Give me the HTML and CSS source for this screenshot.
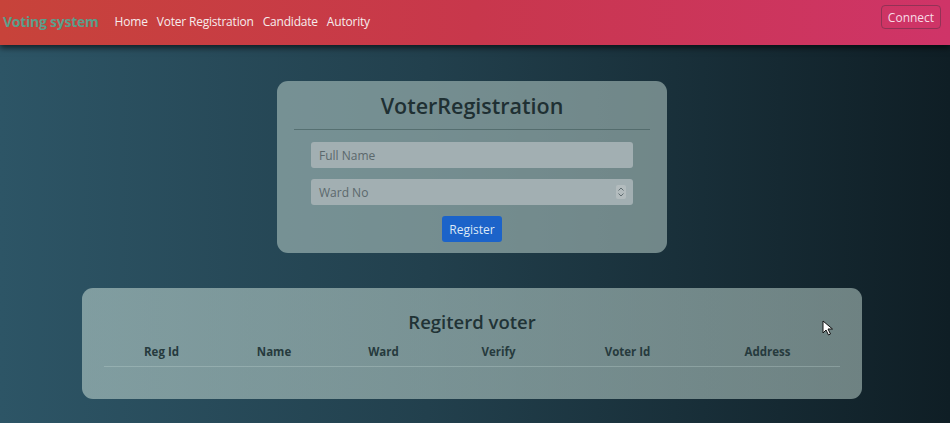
FILE: index.html
```html
<!DOCTYPE html>
<html>
<head>
<meta charset="utf-8">
<link rel="stylesheet" href="styles.css">
</head>
<body>
<nav class="navbar">
  <div class="nav-left">
    <span class="brand">Voting system</span>
    <a class="nav-link">Home</a>
    <a class="nav-link">Voter Registration</a>
    <a class="nav-link">Candidate</a>
    <a class="nav-link">Autority</a>
  </div>
  <button class="connect">Connect</button>
</nav>
<main class="main">
  <section class="card reg-card">
    <h1 class="reg-title">VoterRegistration</h1>
    <hr class="divider">
    <div class="form">
      <div class="input">Full Name</div>
      <div class="input">Ward No<span class="spin"><svg width="8" height="12" viewBox="0 0 8 12"><path d="M1.5 4.5 L4 2 L6.5 4.5 M1.5 7.5 L4 10 L6.5 7.5" fill="none" stroke="#5f6c70" stroke-width="1"/></svg></span></div>
      <button class="register">Register</button>
    </div>
  </section>
  <section class="card list-card">
    <h2 class="list-title">Regiterd voter</h2>
    <div class="table-head">
      <span>Reg Id</span><span>Name</span><span>Ward</span><span>Verify</span><span>Voter Id</span><span>Address</span>
    </div>
    <svg class="cursor" width="12" height="16" viewBox="0 0 12 16"><path d="M1 1 L1 13 L4 10 L6.5 15 L8.5 14 L6 9 L10.5 9 Z" fill="#fff" stroke="#111" stroke-width="1"/></svg>
  </section>
</main>
</body>
</html>
```
FILE: styles.css
```css
* { box-sizing: border-box; }
html, body { margin: 0; height: 100%; }
body {
  font-family: "Open Sans", "Noto Sans", sans-serif;
  background: linear-gradient(90deg, #2d5566 0%, #22404d 45%, #0f1e25 100%);
  overflow: hidden;
}
.navbar {
  height: 45px;
  background: linear-gradient(90deg, #c7433a 0%, #c8374c 50%, #cf3468 100%);
  display: flex;
  justify-content: space-between;
  align-items: flex-start;
  padding: 0 9px 0 3px;
  box-shadow: 0 3px 6px rgba(0,0,0,0.6);
  position: relative;
}
.nav-left {
  display: flex;
  align-items: center;
  height: 43px;
}
.brand {
  font-weight: 700;
  font-size: 14px;
  color: #5c9e8a;
  margin-right: 16px;
  letter-spacing: -0.25px;
}
.nav-link {
  color: #f6ecec;
  font-size: 12px;
  margin-right: 9px;
  letter-spacing: -0.2px;
}
.connect {
  margin-top: 5px;
  height: 24px;
  width: 60px;
  padding: 0;
  background: transparent;
  border: 1.5px solid rgba(125,50,80,0.75);
  border-radius: 4px;
  color: #f8dce6;
  font-family: inherit;
  font-size: 12px;
}
.main {
  display: flex;
  flex-direction: column;
  align-items: center;
  padding-top: 36px;
  padding-right: 6px;
}
.card {
  background: rgba(182, 204, 198, 0.56);
  border-radius: 11px;
}
.reg-card {
  width: 390px;
  height: 172px;
  padding: 10px 17px 0;
  display: flex;
  flex-direction: column;
  align-items: center;
}
.reg-title {
  margin: 0;
  font-size: 21.5px;
  font-weight: 600;
  color: #1f3033;
  line-height: 30px;
}
.divider {
  width: 100%;
  margin: 8px 0 12px;
  border: 0;
  border-top: 1px solid rgba(60,85,85,0.55);
}
.form {
  width: 322px;
  display: flex;
  flex-direction: column;
  align-items: center;
  gap: 11px;
}
.input {
  width: 100%;
  height: 26px;
  background: #a2afb2;
  border-radius: 3px;
  color: #5b686c;
  font-size: 12px;
  padding: 0 8px;
  display: flex;
  align-items: center;
  justify-content: space-between;
}
.spin {
  width: 10px;
  height: 14px;
  background: #b3bcbe;
  display: flex;
  align-items: center;
  justify-content: center;
  border-radius: 2px;
  margin-right: -1px;
}
.register {
  width: 60px;
  height: 26px;
  padding: 0;
  background: #1c63c9;
  border: 0;
  border-radius: 3px;
  color: #dde8f6;
  font-family: inherit;
  font-size: 12px;
}
.list-card {
  margin-top: 35px;
  width: 780px;
  height: 111px;
  padding: 20px 22px 0;
  position: relative;
  background: linear-gradient(90deg, rgba(190,212,206,0.58), rgba(182,204,198,0.56));
}
.list-title {
  margin: 0;
  text-align: center;
  font-size: 18.5px;
  font-weight: 600;
  color: #213336;
  line-height: 28px;
}
.table-head {
  display: grid;
  grid-template-columns: 115px 110px 109px 121px 137px 143px;
  margin-top: 8px;
  padding: 0 0 6px;
  border-bottom: 1px solid rgba(200,220,215,0.3);
  font-size: 11.5px;
  font-weight: 700;
  color: #263a3d;
  line-height: 16px;
}
.table-head span { text-align: center; }
.cursor {
  position: absolute;
  left: 740px;
  top: 32px;
}
```
